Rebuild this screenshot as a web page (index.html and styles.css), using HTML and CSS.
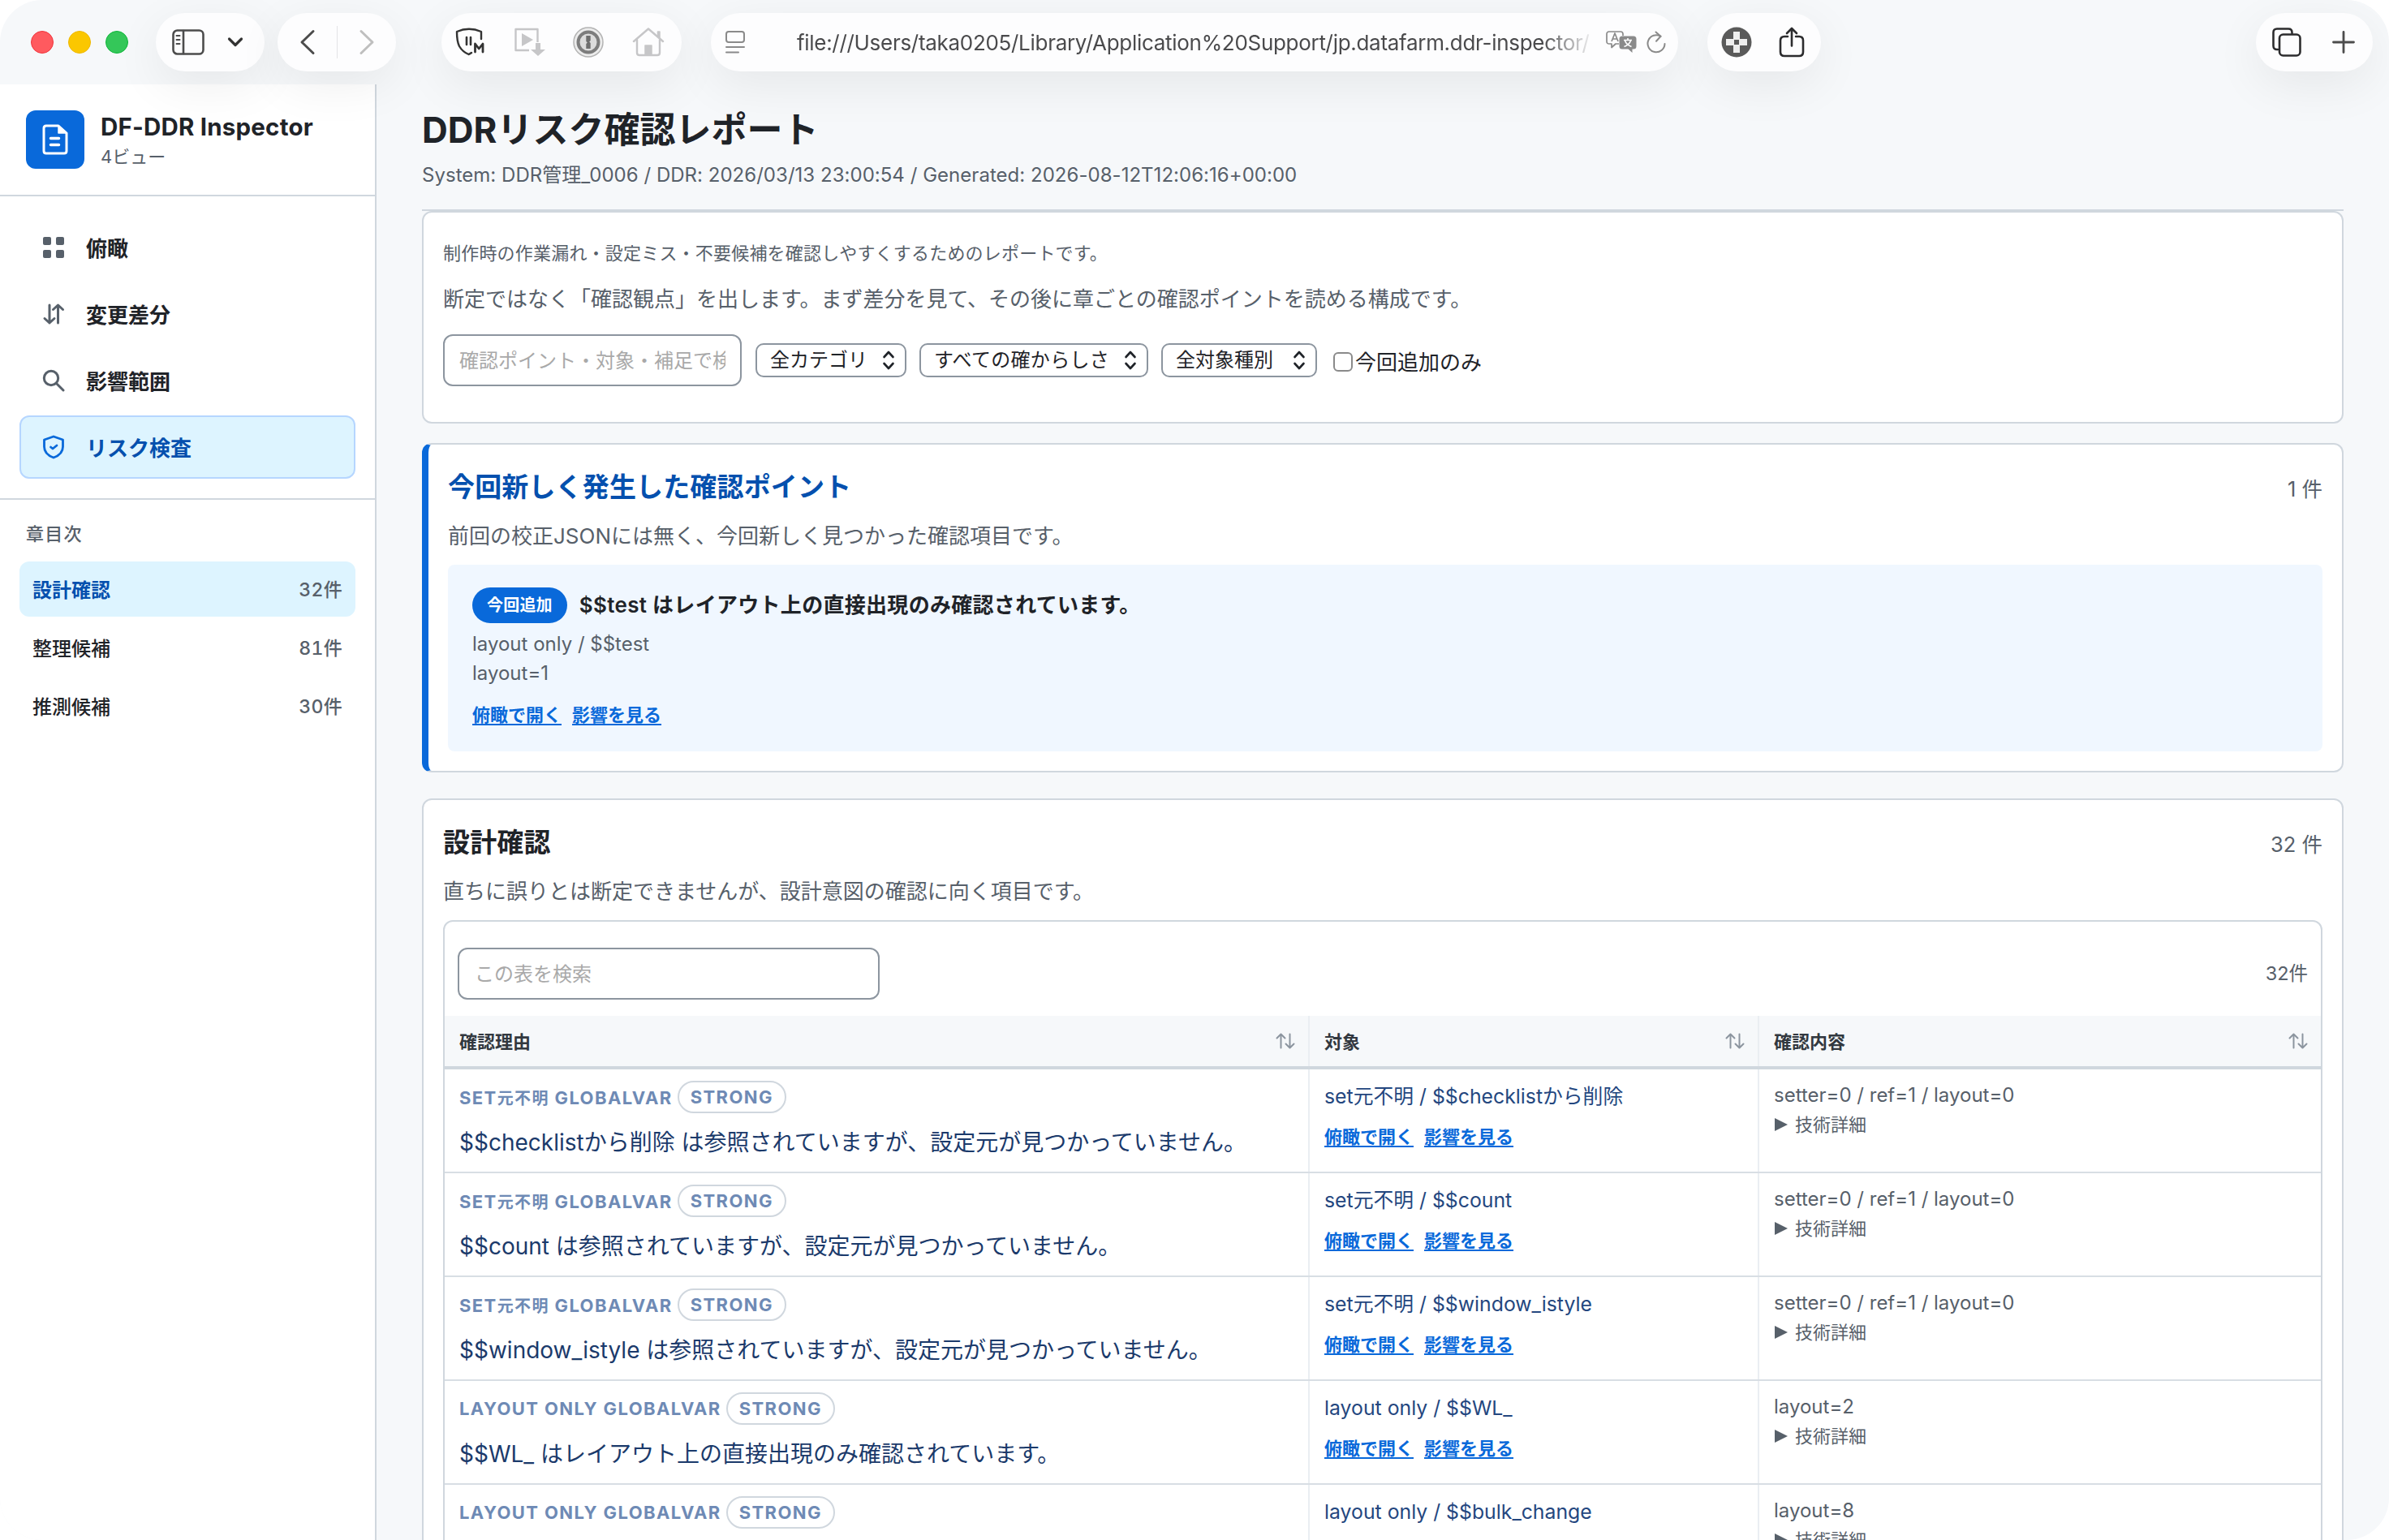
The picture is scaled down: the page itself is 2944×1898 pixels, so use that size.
FILE: index.html
```html
<!DOCTYPE html>
<html lang="ja">
<head>
    <meta charset="UTF-8">
    <meta name="viewport" content="width=device-width, initial-scale=1.0">
    <title>DDRリスク確認レポート</title>
    <link rel="stylesheet" href="styles.css">
</head>
<body>
<div class="window">

    <div class="toolbar">
        <div class="lights">
            <span class="light red"></span>
            <span class="light yellow"></span>
            <span class="light green"></span>
        </div>
        <div class="pill pill-sidebar">
            <svg width="40" height="32" viewBox="0 0 40 32" fill="none" stroke="#4c4c4c" stroke-width="2.6" stroke-linecap="round">
                <rect x="1.5" y="1.5" width="37" height="29" rx="5"/>
                <path d="M14 2v28"/>
                <path d="M5.5 8h4M5.5 13h4M5.5 18h4" stroke-width="2"/>
            </svg>
            <svg width="20" height="14" viewBox="0 0 20 14" fill="none" stroke="#333" stroke-width="3.2" stroke-linecap="round" stroke-linejoin="round"><path d="M2.500 3l7.500 7.500L17.500 3"/></svg>
        </div>
        <div class="pill pill-nav">
            <svg width="20" height="32" viewBox="0 0 20 32" fill="none" stroke="#4c4c4c" stroke-width="3" stroke-linecap="round" stroke-linejoin="round"><path d="M17 2.500L3 16l14 13.500"/></svg>
            <span class="pill-divider"></span>
            <svg width="20" height="32" viewBox="0 0 20 32" fill="none" stroke="#bfbfbf" stroke-width="3" stroke-linecap="round" stroke-linejoin="round"><path d="M3 2.500L17 16 3 29.500"/></svg>
        </div>
        <div class="pill pill-ext">
            <svg width="38" height="36" viewBox="0 0 38 36" fill="none" stroke="#333" stroke-width="2.4" stroke-linejoin="round" stroke-linecap="round">
                <path d="M32 14V5Q17-1.500 2 5c0 7 .5 13 3 18 3 5 6.500 8 11.500 10 1.500-.500 2.500-1.200 3.500-2"/>
                <path d="M14 12v9M19 12v9" stroke-width="2.6"/>
                <path d="M24.500 30V20l4.700 6 4.800-6v10" stroke-width="2.800"/>
            </svg>
            <svg width="38" height="36" viewBox="0 0 38 36" fill="none" stroke="#c6c6c8" stroke-width="2.4" stroke-linejoin="round">
                <path d="M28.500 18V2H1.500v26H18"/>
                <path d="M9 7v16l14-8z" fill="#c6c6c8" stroke="none"/>
                <path d="M26 19h6v8h6l-9 8-9-8h6z" fill="#c6c6c8" stroke="none"/>
            </svg>
            <svg width="38" height="38" viewBox="0 0 38 38" fill="none">
                <circle cx="19" cy="19" r="18" fill="#ececec" stroke="#b3b3b3" stroke-width="1.500"/>
                <circle cx="19" cy="19" r="12.500" fill="#dcdcdc" stroke="#7d7d7d" stroke-width="4"/>
                <path d="M16.300 11h5.400v6l-1.500 1.500 1.500 1.500v7h-5.400v-6l1.500-1.500-1.500-1.500z" fill="#6e6e6e"/>
            </svg>
            <svg width="40" height="36" viewBox="0 0 40 36" fill="none" stroke="#c6c6c8" stroke-width="2.4" stroke-linejoin="round" stroke-linecap="round">
                <path d="M2 17L20 1.500 38 17"/>
                <path d="M6 15v16q0 3 3 3h22q3 0 3-3V15"/>
                <path d="M31.500 10V5h2.500v8z" fill="#c6c6c8" stroke-width="1.500"/>
                <path d="M16 22h8v12h-8z" fill="#c6c6c8" stroke-width="1.500"/>
            </svg>
        </div>
        <div class="pill pill-url">
            <svg width="24" height="28" viewBox="0 0 24 28" fill="none" stroke="#8a8a8a" stroke-width="2" stroke-linecap="round">
                <rect x="1" y="1" width="22" height="13" rx="3"/>
                <path d="M1 20h22M1 26.500h15"/>
            </svg>
            <span class="url">file:///Users/taka0205/Library/Application%20Support/jp.datafarm.ddr-inspector/r</span>
            <svg class="translate" width="38" height="28" viewBox="0 0 38 28" fill="none" stroke="#8a8a8a" stroke-width="1.700" stroke-linejoin="round">
                <path d="M16 16h-4l-5 4.500V16H4q-3 0-3-3V4q0-3 3-3h14q3 0 3 3v2"/>
                <path d="M7 13l4-10 4 10M8.500 10h5"/>
                <path d="M20 6.500h14q3.500 0 3.500 3.500v9q0 3.500-3.500 3.500h-1.500V27l-5-4.500H20q-3.500 0-3.500-3.500v-9q0-3.500 3.500-3.500z" fill="#8a8a8a" stroke="none"/>
                <path d="M22 11.500h10M27 9v2.500M30.500 12q-1.500 5-8 7.500M23.500 12q1.500 5 8 7.500" stroke="#fff" stroke-width="1.600"/>
            </svg>
            <svg width="24" height="28" viewBox="0 0 24 28" fill="none" stroke="#8a8a8a" stroke-width="2" stroke-linecap="round" stroke-linejoin="round">
                <path d="M17.500 6.800A10.500 10.500 0 1 0 22.500 16"/>
                <path d="M11.500 1.500l6 5.300-5.500 6"/>
            </svg>
        </div>
        <div class="pill pill-share">
            <svg width="38" height="38" viewBox="0 0 38 38">
                <circle cx="19" cy="19" r="18.500" fill="#5a5a5a"/>
                <path d="M15 6h8v9h9v8h-9v9h-8v-9H6v-8h9z" fill="#eee"/>
                <rect x="16" y="16" width="6" height="6" fill="#5a5a5a"/>
            </svg>
            <svg width="32" height="38" viewBox="0 0 32 38" fill="none" stroke="#2c2c2e" stroke-width="2.600" stroke-linecap="round" stroke-linejoin="round">
                <path d="M11 12H7q-5 0-5 5v14q0 5 5 5h18q5 0 5-5V17q0-5-5-5h-4"/>
                <path d="M16 23.500V2.500M10 8l6-6 6 6"/>
            </svg>
        </div>
        <div class="pill pill-tabs">
            <svg width="36" height="36" viewBox="0 0 36 36" fill="none" stroke="#2c2c2e" stroke-width="2.600" stroke-linecap="round">
                <path d="M7 27H6q-4.500 0-4.500-4.500V6Q1.500 1.500 6 1.500h14q4.500 0 4.500 4.500v1"/>
                <rect x="9" y="8.500" width="25.500" height="26" rx="4.500"/>
            </svg>
            <svg width="28" height="28" viewBox="0 0 28 28" fill="none" stroke="#4c4c4c" stroke-width="2.800" stroke-linecap="round"><path d="M14 1.500v25M1.500 14h25"/></svg>
        </div>
    </div>

    <div class="layout">
        <aside class="sidebar">
            <div class="brand">
                <div class="brand-logo">
                    <svg width="32" height="38" viewBox="0 0 32 38" fill="none" stroke="#fff" stroke-width="3" stroke-linejoin="round" stroke-linecap="round">
                        <path d="M20 2H5Q2 2 2 5v28q0 3 3 3h22q3 0 3-3V11z"/>
                        <path d="M20 2v9h10z" fill="#fff" stroke-width="1.500"/>
                        <path d="M10.500 17.500h10M10.500 25.500h10" stroke-width="3.500"/>
                    </svg>
                </div>
                <div>
                    <div class="brand-title">DF-DDR Inspector</div>
                    <div class="brand-sub">4ビュー</div>
                </div>
            </div>
            <nav class="nav">
                <a class="nav-item">
                    <svg width="28" height="28" viewBox="0 0 28 28" fill="#57606a"><rect x="1" y="1" width="10" height="10" rx="2"/><rect x="17" y="1" width="10" height="10" rx="2"/><rect x="1" y="17" width="10" height="10" rx="2"/><rect x="17" y="17" width="10" height="10" rx="2"/></svg>
                    <span>俯瞰</span>
                </a>
                <a class="nav-item">
                    <svg width="28" height="28" viewBox="0 0 28 28" fill="none" stroke="#57606a" stroke-width="3" stroke-linecap="round" stroke-linejoin="round"><path d="M9 3v22M3 19.500L9 25l6-5.500M19.500 25V3M13.500 8.500l6-5.500 6 5.500"/></svg>
                    <span>変更差分</span>
                </a>
                <a class="nav-item">
                    <svg width="28" height="28" viewBox="0 0 28 28" fill="none" stroke="#57606a" stroke-width="3" stroke-linecap="round"><circle cx="11" cy="11" r="8.700"/><path d="M17.500 17.500l8.500 8.500"/></svg>
                    <span>影響範囲</span>
                </a>
                <a class="nav-item active">
                    <svg width="28" height="30" viewBox="0 0 28 30" fill="none" stroke="#0969da" stroke-width="2.800" stroke-linecap="round" stroke-linejoin="round"><path d="M14 2L2.500 6v8.500C2.500 21 7 25.500 14 28c7-2.500 11.500-7 11.500-13.500V6z"/><path d="M10.500 15l2.500 2 5-4"/></svg>
                    <span>リスク検査</span>
                </a>
            </nav>
            <div class="toc">
                <div class="toc-title">章目次</div>
                <a class="toc-item active"><span>設計確認</span><b>32件</b></a>
                <a class="toc-item"><span>整理候補</span><b>81件</b></a>
                <a class="toc-item"><span>推測候補</span><b>30件</b></a>
            </div>
        </aside>

        <main class="main">
            <header class="page-header">
                <h1>DDRリスク確認レポート</h1>
                <p>System: DDR管理_0006 / DDR: 2026/03/13 23:00:54 / Generated: 2026-08-12T12:06:16+00:00</p>
            </header>

            <section class="card intro">
                <p class="lead-small">制作時の作業漏れ・設定ミス・不要候補を確認しやすくするためのレポートです。</p>
                <p class="lead">断定ではなく「確認観点」を出します。まず差分を見て、その後に章ごとの確認ポイントを読める構成です。</p>
                <div class="filters">
                    <div class="search"><span>確認ポイント・対象・補足で検索</span></div>
                    <div class="select select-category">全カテゴリ
                        <svg width="16" height="26" viewBox="0 0 16 26"><path d="M2.500 9L8 3 13.500 9M2.500 17L8 23 13.500 17"/></svg>
                    </div>
                    <div class="select select-strength">すべての確からしさ
                        <svg width="16" height="26" viewBox="0 0 16 26"><path d="M2.500 9L8 3 13.500 9M2.500 17L8 23 13.500 17"/></svg>
                    </div>
                    <div class="select select-kind">全対象種別
                        <svg width="16" height="26" viewBox="0 0 16 26"><path d="M2.500 9L8 3 13.500 9M2.500 17L8 23 13.500 17"/></svg>
                    </div>
                    <label class="only-new"><span class="checkbox"></span>今回追加のみ</label>
                </div>
            </section>

            <section class="card new-points">
                <div class="card-head"><h2>今回新しく発生した確認ポイント</h2><span>1 件</span></div>
                <p class="card-desc">前回の校正JSONには無く、今回新しく見つかった確認項目です。</p>
                <div class="point">
                    <div class="point-title"><span class="badge">今回追加</span><strong>$$test はレイアウト上の直接出現のみ確認されています。</strong></div>
                    <div class="point-text">layout only / $$test</div>
                    <div class="point-text">layout=1</div>
                    <div class="links"><a>俯瞰で開く</a><a>影響を見る</a></div>
                </div>
            </section>

            <section class="card chapter">
                <div class="card-head"><h2>設計確認</h2><span>32 件</span></div>
                <p class="card-desc">直ちに誤りとは断定できませんが、設計意図の確認に向く項目です。</p>
                <div class="table-box">
                    <div class="table-tools">
                        <div class="search"><span>この表を検索</span></div>
                        <span class="count">32件</span>
                    </div>
                    <div class="row head">
                        <div><span>確認理由</span><svg width="24" height="20" viewBox="0 0 24 20"><path d="M6.500 18.500V1.500M1.500 6.500l5-5 5 5M17.500 1.500v17M12.500 13.500l5 5 5-5"/></svg></div>
                        <div><span>対象</span><svg width="24" height="20" viewBox="0 0 24 20"><path d="M6.500 18.500V1.500M1.500 6.500l5-5 5 5M17.500 1.500v17M12.500 13.500l5 5 5-5"/></svg></div>
                        <div><span>確認内容</span><svg width="24" height="20" viewBox="0 0 24 20"><path d="M6.500 18.500V1.500M1.500 6.500l5-5 5 5M17.500 1.500v17M12.500 13.500l5 5 5-5"/></svg></div>
                    </div>
                    <div class="row">
                        <div>
                            <div class="meta"><span>SET<small>元不明</small> GLOBALVAR</span><span class="tag">STRONG</span></div>
                            <div class="reason">$$checklistから削除 は参照されていますが、設定元が見つかっていません。</div>
                        </div>
                        <div>
                            <div class="target">set元不明 / $$checklistから削除</div>
                            <div class="links"><a>俯瞰で開く</a><a>影響を見る</a></div>
                        </div>
                        <div>
                            <div class="detail">setter=0 / ref=1 / layout=0</div>
                            <div class="more">技術詳細</div>
                        </div>
                    </div>
                    <div class="row">
                        <div>
                            <div class="meta"><span>SET<small>元不明</small> GLOBALVAR</span><span class="tag">STRONG</span></div>
                            <div class="reason">$$count は参照されていますが、設定元が見つかっていません。</div>
                        </div>
                        <div>
                            <div class="target">set元不明 / $$count</div>
                            <div class="links"><a>俯瞰で開く</a><a>影響を見る</a></div>
                        </div>
                        <div>
                            <div class="detail">setter=0 / ref=1 / layout=0</div>
                            <div class="more">技術詳細</div>
                        </div>
                    </div>
                    <div class="row">
                        <div>
                            <div class="meta"><span>SET<small>元不明</small> GLOBALVAR</span><span class="tag">STRONG</span></div>
                            <div class="reason">$$window_istyle は参照されていますが、設定元が見つかっていません。</div>
                        </div>
                        <div>
                            <div class="target">set元不明 / $$window_istyle</div>
                            <div class="links"><a>俯瞰で開く</a><a>影響を見る</a></div>
                        </div>
                        <div>
                            <div class="detail">setter=0 / ref=1 / layout=0</div>
                            <div class="more">技術詳細</div>
                        </div>
                    </div>
                    <div class="row">
                        <div>
                            <div class="meta"><span>LAYOUT ONLY GLOBALVAR</span><span class="tag">STRONG</span></div>
                            <div class="reason">$$WL_ はレイアウト上の直接出現のみ確認されています。</div>
                        </div>
                        <div>
                            <div class="target">layout only / $$WL_</div>
                            <div class="links"><a>俯瞰で開く</a><a>影響を見る</a></div>
                        </div>
                        <div>
                            <div class="detail">layout=2</div>
                            <div class="more">技術詳細</div>
                        </div>
                    </div>
                    <div class="row">
                        <div>
                            <div class="meta"><span>LAYOUT ONLY GLOBALVAR</span><span class="tag">STRONG</span></div>
                        </div>
                        <div>
                            <div class="target">layout only / $$bulk_change</div>
                        </div>
                        <div>
                            <div class="detail">layout=8</div>
                            <div class="more">技術詳細</div>
                        </div>
                    </div>
                </div>
            </section>
        </main>
    </div>
</div>
</body>
</html>
```
FILE: styles.css
```css
* {
    box-sizing: border-box;
}
body {
    margin: 0;
    background: #fff;
    color: #1f2328;
    font-family: Inter, "Noto Sans CJK JP", sans-serif;
    font-size: 26px;
    overflow: hidden;
}
h1, h2, p {
    margin: 0;
}
svg {
    display: block;
    flex-shrink: 0;
}
.window {
    width: 2944px;
    height: 1898px;
    overflow: hidden;
    border-radius: 52px;
    background: #f6f8fa;
    display: flex;
    flex-direction: column;
}

/* browser toolbar */
.toolbar {
    position: relative;
    z-index: 2;
    height: 104px;
    flex-shrink: 0;
    display: flex;
    align-items: center;
    padding: 0 20px 0 38px;
}
.lights {
    display: flex;
    gap: 18px;
    margin-right: 34px;
}
.light {
    width: 28px;
    height: 28px;
    border-radius: 50%;
}
.red { background: #ff5a5f; border: 1px solid #f0343c; }
.yellow { background: #fbc700; border: 1px solid #eeb800; }
.green { background: #34c759; border: 1px solid #0fb63a; }
.pill {
    height: 72px;
    border-radius: 36px;
    background: #fdfdfe;
    box-shadow: 0 16px 60px rgba(0, 0, 0, 0.07);
    display: flex;
    align-items: center;
    flex-shrink: 0;
}
.pill-sidebar {
    width: 134px;
    padding-left: 20px;
    gap: 28px;
    margin-right: 16px;
}
.pill-nav {
    width: 146px;
    padding-left: 27px;
    gap: 26px;
    margin-right: 56px;
}
.pill-divider {
    width: 1px;
    height: 40px;
    background: #e4e4e6;
}
.pill-ext {
    width: 296px;
    padding: 0 21px 0 17px;
    justify-content: space-between;
    margin-right: 36px;
}
.pill-url {
    width: 1192px;
    padding: 0 15px 0 18px;
    margin-right: 36px;
}
.url {
    width: 978px;
    margin: 0 20px 0 64px;
    overflow: hidden;
    white-space: nowrap;
    font-size: 26px;
    letter-spacing: -0.3px;
    color: #4a4a4c;
    -webkit-mask-image: linear-gradient(to right, #000 94%, rgba(0, 0, 0, 0.1));
    mask-image: linear-gradient(to right, #000 94%, rgba(0, 0, 0, 0.1));
}
.translate {
    margin-right: 12px;
}
.pill-share {
    width: 140px;
    padding: 0 20px 0 17px;
    justify-content: space-between;
}
.pill-tabs {
    width: 144px;
    padding: 0 22px 0 20px;
    justify-content: space-between;
    margin-left: auto;
}

.layout {
    display: flex;
    flex: 1;
    min-height: 0;
}

/* sidebar */
.sidebar {
    width: 464px;
    flex-shrink: 0;
    background: #fff;
    border-right: 2px solid #d0d7de;
}
.brand {
    height: 138px;
    padding: 0 32px;
    border-bottom: 2px solid #d0d7de;
    display: flex;
    align-items: center;
    gap: 20px;
}
.brand-logo {
    width: 72px;
    height: 72px;
    border-radius: 12px;
    background: #0969da;
    display: flex;
    align-items: center;
    justify-content: center;
}
.brand-title {
    font-size: 29.5px;
    font-weight: 700;
    letter-spacing: 0.2px;
    line-height: 42px;
    white-space: nowrap;
}
.brand-sub {
    font-size: 22px;
    line-height: 32px;
    color: #57606a;
}
.nav {
    padding: 24px;
    border-bottom: 2px solid #d0d7de;
    display: flex;
    flex-direction: column;
    gap: 4px;
}
.nav-item {
    height: 78px;
    padding-left: 26px;
    border: 2px solid transparent;
    border-radius: 12px;
    display: flex;
    align-items: center;
    gap: 26px;
    font-size: 26px;
    font-weight: 600;
}
.nav-item span,
.toc-item span,
.toc-item b {
    padding-bottom: 2px;
}
.nav-item.active {
    background: #ddf4ff;
    border-color: #b6d6ff;
    color: #0550ae;
}
.toc {
    padding: 24px;
}
.toc-title {
    height: 36px;
    line-height: 36px;
    margin: 0 8px 16px;
    font-size: 22px;
    font-weight: 500;
    letter-spacing: 1.2px;
    color: #57606a;
}
.toc-item {
    height: 68px;
    margin-bottom: 4px;
    padding: 0 16px;
    border-radius: 12px;
    display: flex;
    align-items: center;
    justify-content: space-between;
    font-size: 24px;
    font-weight: 500;
}
.toc-item b {
    font-size: 23px;
    font-weight: 550;
    font-variant-numeric: tabular-nums;
    letter-spacing: 0.3px;
    color: #57606a;
}
.toc-item.active {
    background: #ddf4ff;
}
.toc-item.active span {
    font-weight: 700;
    color: #0550ae;
}

/* report */
.main {
    flex: 1;
    padding: 0 56px;
}
.page-header {
    height: 156px;
    padding-top: 24px;
    border-bottom: 2px solid #d0d7de;
}
.page-header h1 {
    font-size: 44px;
    font-weight: 700;
    line-height: 64px;
}
.page-header p {
    margin-top: 6px;
    font-size: 24px;
    letter-spacing: 0.03px;
    line-height: 36px;
    color: #57606a;
}
.card {
    background: #fff;
    border: 2px solid #d0d7de;
    border-radius: 12px;
}
.intro {
    height: 262px;
    padding: 32px 24px 0;
}
.lead-small {
    font-size: 22px;
    letter-spacing: 0.2px;
    line-height: 36px;
    color: #57606a;
}
.lead {
    margin-top: 19px;
    font-size: 26px;
    line-height: 40px;
    color: #57606a;
}
.filters {
    display: flex;
    align-items: center;
    margin-top: 23px;
}
.search {
    height: 64px;
    border: 2px solid #8c959f;
    border-radius: 12px;
    padding: 0 18px;
    font-size: 24px;
    line-height: 61px;
    color: #a9a9a9;
}
.search span {
    display: block;
    overflow: hidden;
    white-space: nowrap;
}
.filters .search {
    width: 368px;
    margin-right: 17px;
}
.select {
    height: 42px;
    padding: 0 12px 0 16px;
    border: 2px solid #8c959f;
    border-radius: 10px;
    display: flex;
    align-items: center;
    justify-content: space-between;
    font-size: 24px;
    line-height: 38px;
    margin-right: 16px;
}
.select svg {
    fill: none;
    stroke: #1f2328;
    stroke-width: 2.6;
    stroke-linecap: round;
    stroke-linejoin: round;
}
.select-category { width: 186px; }
.select-strength { width: 282px; letter-spacing: 0.3px; }
.select-kind { width: 192px; margin-right: 20px; }
.only-new {
    display: flex;
    align-items: center;
    gap: 3px;
}
.checkbox {
    width: 24px;
    height: 24px;
    margin-top: 3px;
    border: 2px solid #8a8a8a;
    border-radius: 6px;
}
.card-head {
    display: flex;
    align-items: center;
    justify-content: space-between;
    line-height: 50px;
}
.card-head h2 {
    font-size: 33px;
    font-weight: 700;
    letter-spacing: 0.15px;
}
.card-head span {
    padding-top: 6px;
    font-size: 25.5px;
    color: #57606a;
}
.card-desc {
    line-height: 40px;
    color: #57606a;
}
.new-points {
    height: 406px;
    margin-top: 24px;
    padding: 24px 24px 0;
    border-left: 8px solid #0969da;
}
.new-points h2 {
    color: #0550ae;
}
.new-points .card-desc {
    margin-top: 13px;
}
.point {
    height: 230px;
    margin-top: 15px;
    padding: 28px 30px 0;
    border-radius: 8px;
    background: #f0f7ff;
}
.point-title {
    display: flex;
    align-items: center;
    height: 44px;
    gap: 15px;
    margin-bottom: 8px;
}
.point-title strong {
    padding-bottom: 6px;
    font-weight: 600;
    letter-spacing: 0.3px;
}
.badge {
    height: 44px;
    padding: 0 18px;
    border-radius: 22px;
    background: #0969da;
    color: #fff;
    font-size: 20px;
    font-weight: 700;
    letter-spacing: 0.2px;
    line-height: 44px;
}
.point-text {
    font-size: 24px;
    line-height: 36px;
    color: #57606a;
}
.links {
    display: flex;
    gap: 13px;
    font-size: 22px;
    font-weight: 600;
    line-height: 32px;
    color: #0969da;
}
.links a {
    text-decoration: underline;
    text-decoration-thickness: 2px;
    text-underline-offset: 3px;
}
.point .links {
    margin-top: 17px;
}
.chapter {
    margin-top: 32px;
    padding: 24px 24px 0;
}
.chapter .card-desc {
    margin-top: 13px;
}

/* table */
.table-box {
    margin-top: 15px;
    border: 2px solid #d0d7de;
    border-radius: 12px;
    overflow: hidden;
}
.table-tools {
    height: 116px;
    padding: 16px 16px 4px 16px;
    display: flex;
    align-items: center;
    justify-content: space-between;
}
.table-tools .search {
    width: 520px;
    padding: 0 19px;
}
.count {
    padding-bottom: 4px;
    font-size: 23.5px;
    color: #57606a;
}
.row {
    height: 128px;
    display: grid;
    grid-template-columns: 1066px 554px 1fr;
    border-bottom: 2px solid #d8dee4;
}
.row > div {
    padding: 14px 18px 0;
    border-right: 2px solid #eaeef2;
}
.row > div:last-child {
    border-right: none;
}
.head {
    height: 66px;
    background: #f6f8fa;
    border-bottom: 4px solid #d0d7de;
}
.head > div {
    display: flex;
    align-items: center;
    justify-content: space-between;
    padding: 0 16px 0 18px;
    font-size: 22px;
    font-weight: 600;
    color: #32383f;
}
.head span {
    padding-bottom: 2px;
}
.head svg {
    fill: none;
    stroke: #8c959f;
    stroke-width: 2;
    stroke-linecap: round;
    stroke-linejoin: round;
}
.meta {
    display: flex;
    align-items: center;
    gap: 6px;
    height: 40px;
    font-size: 22px;
    font-weight: 700;
    letter-spacing: 1.4px;
    color: #6e8ab5;
}
.meta small {
    font-size: 20px;
}
.tag {
    height: 40px;
    padding: 0 14px;
    border: 2px solid #d0d7de;
    border-radius: 20px;
    line-height: 36px;
}
.reason {
    margin-top: 16px;
    font-size: 28px;
    line-height: 40px;
    white-space: nowrap;
    color: #1b3a6b;
}
.target {
    font-size: 24.8px;
    line-height: 39px;
    white-space: nowrap;
    color: #24477f;
}
.row .links {
    margin-top: 14px;
}
.detail, .more {
    font-size: 22px;
    line-height: 36px;
    color: #57606a;
}
.detail {
    font-size: 24px;
}
.more {
    display: flex;
    align-items: center;
    gap: 9px;
}
.more::before {
    content: "";
    margin-left: 1px;
    border-left: 16px solid #57606a;
    border-top: 8px solid transparent;
    border-bottom: 8px solid transparent;
}
```
